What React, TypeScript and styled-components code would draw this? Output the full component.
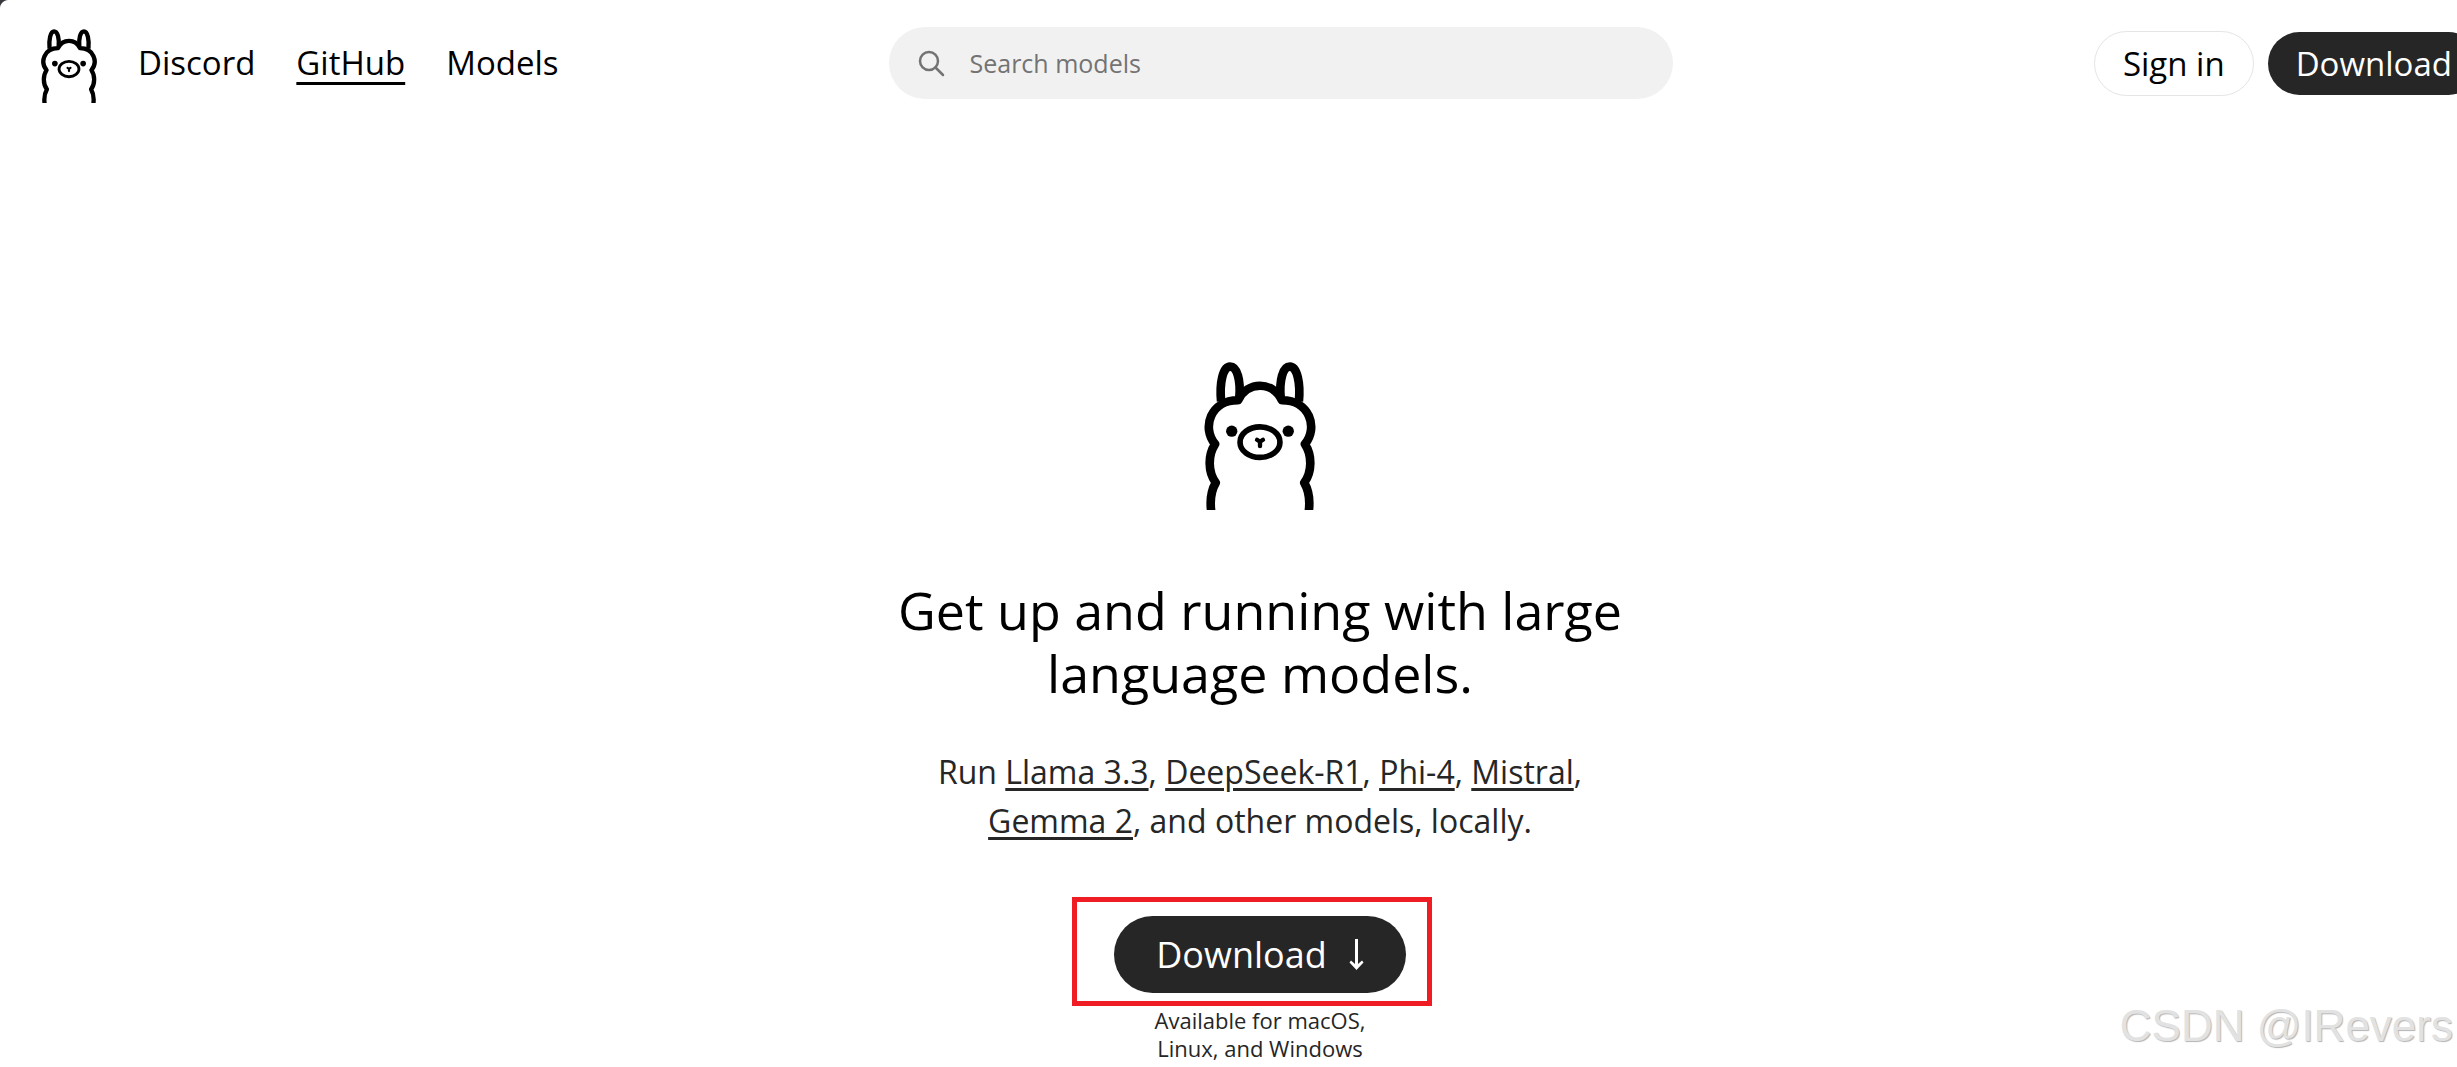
import React from "react";
import styled, { createGlobalStyle } from "styled-components";

const GlobalStyle = createGlobalStyle`
  *, *::before, *::after { box-sizing: border-box; }
  body {
    margin: 0;
    background: #ffffff;
    color: #000000;
    font-family: "Open Sans", "Noto Sans", sans-serif;
  }
`;

const Viewport = styled.div`
  position: relative;
  min-height: 100vh;
  overflow: hidden;
`;

const Corner = styled.svg`
  position: absolute;
  top: 0;
  left: 0;
`;

const Page = styled.div`
  width: calc(100% + 63px);
`;

const Header = styled.header`
  display: grid;
  grid-template-columns: minmax(0, 1fr) minmax(0, 784px) minmax(0, 1fr);
  align-items: center;
  padding: 23px 0 0 41px;
`;

const Nav = styled.nav`
  display: flex;
  align-items: center;
  gap: 41px;
`;

const LogoLink = styled.a`
  display: block;
  height: 80px;
  padding-top: 6px;
`;

const NavLink = styled.a<{ $active?: boolean }>`
  color: #000000;
  font-size: 33px;
  line-height: 48px;
  text-decoration: ${(p) => (p.$active ? "underline" : "none")};
  text-decoration-thickness: 3px;
  text-underline-offset: 7px;
`;

const SearchBox = styled.label`
  display: flex;
  align-items: center;
  gap: 25px;
  height: 72px;
  padding: 0 28px;
  border-radius: 36px;
  background: #f1f1f1;
`;

const SearchInput = styled.input`
  flex: 1;
  min-width: 0;
  padding: 0;
  border: 0;
  outline: 0;
  background: transparent;
  color: #000000;
  font: inherit;
  font-size: 25px;
  line-height: 36px;
  &::placeholder {
    color: #737373;
    opacity: 1;
  }
`;

const Actions = styled.div`
  display: flex;
  align-items: center;
  justify-content: flex-end;
  gap: 14px;
  padding-right: 40px;
`;

const PillLink = styled.a<{ $dark?: boolean }>`
  padding: 7px 28px;
  border: ${(p) => (p.$dark ? "0" : "1px solid #e5e5e5")};
  border-radius: 33px;
  background: ${(p) => (p.$dark ? "#262626" : "#ffffff")};
  color: ${(p) => (p.$dark ? "#ffffff" : "#000000")};
  font-size: 33px;
  line-height: 49px;
  text-decoration: none;
  white-space: nowrap;
`;

const Hero = styled.main`
  display: flex;
  flex-direction: column;
  align-items: center;
  padding-top: 259px;
  text-align: center;
`;

const Title = styled.h1`
  max-width: 784px;
  margin: 68px 0 0;
  font-size: 52px;
  font-weight: 400;
  line-height: 63px;
`;

const Intro = styled.p`
  max-width: 700px;
  margin: 43px 0 0;
  color: #262626;
  font-size: 32px;
  line-height: 49px;
`;

const ModelLink = styled.a`
  color: inherit;
  text-decoration: underline;
  text-decoration-thickness: 3px;
  text-underline-offset: 4px;
`;

const DownloadArea = styled.div`
  position: relative;
  margin-top: 71px;
`;

const DownloadButton = styled.button`
  display: flex;
  align-items: center;
  gap: 22px;
  height: 77px;
  padding: 0 42px;
  border: 0;
  border-radius: 39px;
  background: #262626;
  color: #ffffff;
  font: inherit;
  font-size: 36px;
`;

const Highlight = styled.div`
  position: absolute;
  top: -19px;
  right: -26px;
  bottom: -13px;
  left: -42px;
  border: 5px solid #ef1c24;
  pointer-events: none;
`;

const Caption = styled.p`
  max-width: 240px;
  margin: 13px 0 0;
  color: #262626;
  font-size: 22px;
  line-height: 28px;
`;

const Watermark = styled.div`
  position: absolute;
  right: 4px;
  bottom: 16px;
  color: #e2e2e2;
  font-family: "Liberation Sans", Arial, sans-serif;
  font-size: 44px;
  line-height: 50px;
  text-shadow: 1px 1px 1px #b4b4b4;
  white-space: nowrap;
  pointer-events: none;
`;

const LlamaArt = styled.svg`
  display: block;
`;

function Llama({ width, height }: { width: number; height: number }) {
  return (
    <LlamaArt width={width} height={height} viewBox="72 50 336 445" fill="none" stroke="#000" role="img" aria-label="Ollama">
      <g strokeWidth="26" strokeLinejoin="round">
        <path d="M95 510C88 470 91 440 107 413C83 380 83 330 105 297C64 248 91 165 174 165C202 107 278 107 306 165C389 165 416 248 375 297C397 330 397 380 373 413C389 440 392 470 385 510" />
        <path d="M123 168C118 115 128 64 150 64C172 64 182 106 178 156" />
        <path d="M357 168C362 115 352 64 330 64C308 64 298 106 302 156" />
      </g>
      <ellipse cx="240" cy="291" rx="60" ry="46" strokeWidth="17" />
      <circle cx="155" cy="258" r="17" fill="#000" stroke="none" />
      <circle cx="325" cy="258" r="17" fill="#000" stroke="none" />
      <path d="M231 284L240 290L249 284M240 290V303" strokeWidth="13" strokeLinecap="round" strokeLinejoin="round" />
    </LlamaArt>
  );
}

function SearchIcon() {
  return (
    <svg width="28" height="28" viewBox="0 0 28 28" fill="none" stroke="#737373" strokeWidth="2.500" strokeLinecap="round" aria-hidden="true">
      <circle cx="12" cy="12" r="9" />
      <path d="M18.500 18.500L26 26" />
    </svg>
  );
}

function DownArrow() {
  return (
    <svg width="15" height="34" viewBox="0 0 15 34" fill="#fff" aria-hidden="true">
      <path d="M6 1H9V26L13 22.500L14.500 24.500L7.500 32L.5 24.500L2 22.500L6 26Z" />
    </svg>
  );
}

export default function App() {
  return (
    <Viewport>
      <GlobalStyle />
      <Page>
        <Header>
          <Nav>
            <LogoLink href="#home">
              <Llama width={56} height={74} />
            </LogoLink>
            <NavLink href="#discord">Discord</NavLink>
            <NavLink href="#github" $active>GitHub</NavLink>
            <NavLink href="#models">Models</NavLink>
          </Nav>
          <SearchBox>
            <SearchIcon />
            <SearchInput type="text" placeholder="Search models" aria-label="Search models" />
          </SearchBox>
          <Actions>
            <PillLink href="#signin">Sign in</PillLink>
            <PillLink href="#download" $dark>Download</PillLink>
          </Actions>
        </Header>
        <Hero>
          <Llama width={112} height={148} />
          <Title>Get up and running with large language models.</Title>
          <Intro>
            Run <ModelLink href="#llama">Llama 3.3</ModelLink>, <ModelLink href="#deepseek">DeepSeek-R1</ModelLink>,{" "}
            <ModelLink href="#phi">Phi-4</ModelLink>, <ModelLink href="#mistral">Mistral</ModelLink>,{" "}
            <ModelLink href="#gemma">Gemma 2</ModelLink>, and other models, locally.
          </Intro>
          <DownloadArea>
            <DownloadButton type="button">
              Download
              <DownArrow />
            </DownloadButton>
            <Highlight />
          </DownloadArea>
          <Caption>Available for macOS, Linux, and Windows</Caption>
        </Hero>
      </Page>
      <Corner width="10" height="10" viewBox="0 0 10 10" aria-hidden="true">
        <path d="M0 0H8C4 0 0 4 0 8Z" fill="#3a383c" />
      </Corner>
      <Watermark>CSDN @IRevers</Watermark>
    </Viewport>
  );
}
